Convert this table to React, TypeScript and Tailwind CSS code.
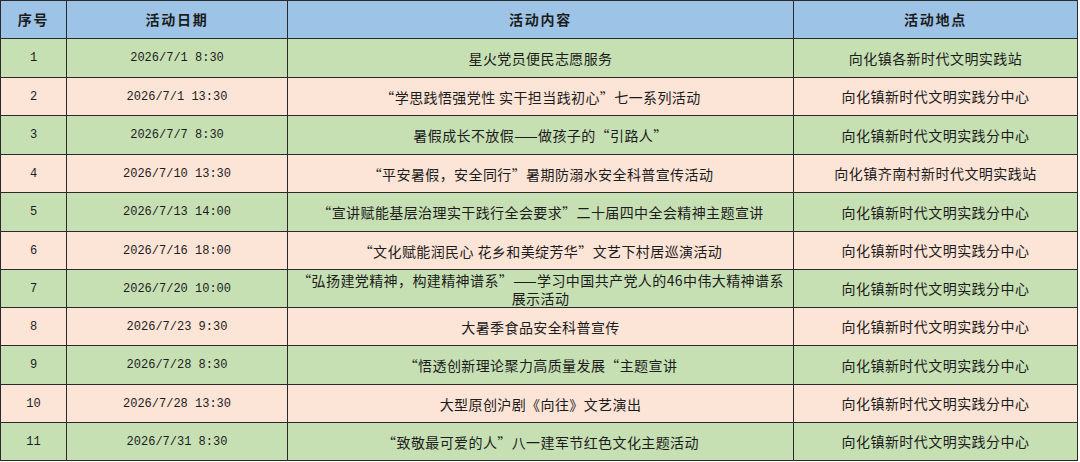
const cjk = { fontFamily: '"Noto Sans CJK SC", sans-serif' };

type Row = {
  no: string;
  date: string;
  content: string[];
  place: string;
  tall: boolean;
};

const CENTER = "向化镇新时代文明实践分中心";

const rows: Row[] = [
  { no: "1", date: "2026/7/1 8:30", content: ["星火党员便民志愿服务"], place: "向化镇各新时代文明实践站", tall: true },
  { no: "2", date: "2026/7/1 13:30", content: ["“学思践悟强党性 实干担当践初心”七一系列活动"], place: CENTER, tall: false },
  { no: "3", date: "2026/7/7 8:30", content: ["暑假成长不放假——做孩子的“引路人”"], place: CENTER, tall: true },
  { no: "4", date: "2026/7/10 13:30", content: ["“平安暑假，安全同行”暑期防溺水安全科普宣传活动"], place: "向化镇齐南村新时代文明实践站", tall: false },
  { no: "5", date: "2026/7/13 14:00", content: ["“宣讲赋能基层治理实干践行全会要求”二十届四中全会精神主题宣讲"], place: CENTER, tall: true },
  { no: "6", date: "2026/7/16 18:00", content: ["“文化赋能润民心 花乡和美绽芳华”文艺下村居巡演活动"], place: CENTER, tall: false },
  { no: "7", date: "2026/7/20 10:00", content: ["“弘扬建党精神，构建精神谱系”——学习中国共产党人的46中伟大精神谱系", "展示活动"], place: CENTER, tall: false },
  { no: "8", date: "2026/7/23 9:30", content: ["大暑季食品安全科普宣传"], place: CENTER, tall: false },
  { no: "9", date: "2026/7/28 8:30", content: ["“悟透创新理论聚力高质量发展“主题宣讲"], place: CENTER, tall: true },
  { no: "10", date: "2026/7/28 13:30", content: ["大型原创沪剧《向往》文艺演出"], place: CENTER, tall: false },
  { no: "11", date: "2026/7/31 8:30", content: ["“致敬最可爱的人”八一建军节红色文化主题活动"], place: CENTER, tall: false },
];

const cols = "grid grid-cols-[66px_221px_506px_284px]";
const cell = "flex items-center justify-center border-r border-[#2a2a2a] text-center";
const mono = { fontFamily: '"Liberation Mono", monospace' };

export default function App() {
  return (
    <div className="h-[462px] w-[1080px] bg-white text-[#1c1c1c]">
      <div className="w-[1078px] border-l border-t border-[#2a2a2a]">
        <div className={`${cols} h-[38px] border-b border-[#2a2a2a] bg-[#9dc3e6] text-[14px] font-bold tracking-[1.8px]`} style={cjk}>
          <div className={cell}>序号</div>
          <div className={cell}>活动日期</div>
          <div className={cell}>活动内容</div>
          <div className={cell}>活动地点</div>
        </div>
        {rows.map((row, i) => (
          <div
            key={row.no}
            className={`${cols} border-b border-[#2a2a2a] ${row.tall ? "h-[39px]" : "h-[38px]"} ${
              i % 2 === 0 ? "bg-[#c6e0b4]" : "bg-[#fce4d6]"
            }`}
          >
            <div className={`${cell} text-[12px]`} style={mono}>
              {row.no}
            </div>
            <div className={`${cell} whitespace-pre text-[12px]`} style={mono}>
              {row.date}
            </div>
            <div className={`${cell} flex-col text-[14px] leading-[18px] tracking-[0.4px]`} style={cjk}>
              {row.content.map((line) => (
                <span key={line} className="whitespace-nowrap">
                  {line}
                </span>
              ))}
            </div>
            <div className={`${cell} text-[14px] tracking-[0.45px]`} style={cjk}>
              {row.place}
            </div>
          </div>
        ))}
      </div>
    </div>
  );
}
